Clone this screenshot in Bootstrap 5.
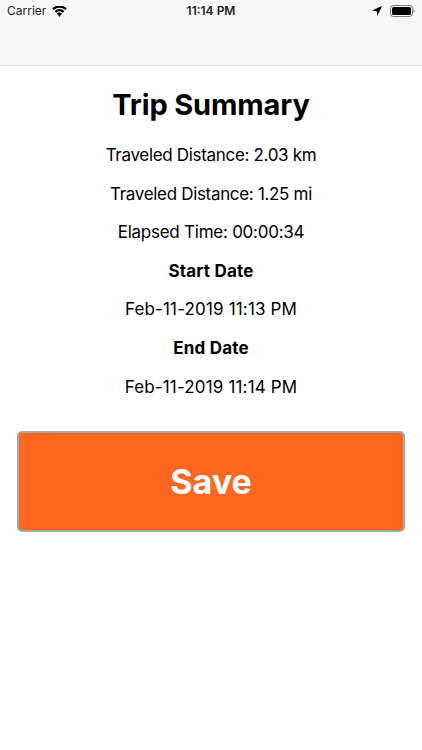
<!DOCTYPE html>
<html lang="en"><head><meta charset="utf-8">
<link href="https://cdn.jsdelivr.net/npm/bootstrap@5.3.0/dist/css/bootstrap.min.css" rel="stylesheet">
<style>
html,body{height:750px;overflow:hidden;background:#fff}
body{font-family:Inter,"Liberation Sans",sans-serif;color:#000}
.topbar{height:66px;background:#f8f8f8;border-bottom:1px solid #dcdcdc}
.statusline{height:22px;font-size:12px;padding:0 7px;font-weight:400;color:#222}
.statusline .clock{font-weight:600;top:3px;line-height:16px}
.carrierset{gap:6px}
.sumtitle{font-size:29px;font-weight:700;line-height:35px;margin:0;padding-top:21px;letter-spacing:-.15px}
.sumlines{font-size:17px;line-height:21px;gap:17.6px;padding-top:23px}
.sumlines p{margin:0}
.sumlines .tight{letter-spacing:-.32px}
.sumlines .mid{letter-spacing:-.25px}
.sumlines .wide{letter-spacing:.16px}
.sumlines .boldwide{letter-spacing:.2px}
.savebtn{margin:33px 17px 0;width:388px;height:101px;background:#ff6720;border:2px solid #a9a9a9;border-radius:5px;color:#fff;font-size:34px;font-weight:700;padding:0}
.savebtn:hover{background:#ff6720;color:#fff;border-color:#a9a9a9}
</style></head><body>
<div class="topbar"><div class="statusline d-flex align-items-center justify-content-between position-relative">
<div class="d-flex align-items-center carrierset"><span>Carrier</span>
<svg width="15" height="11" viewBox="0 0 16 12"><path d="M8 11.800 5.200 8.400a4.200 4.200 0 0 1 5.600 0zM4.300 7.400 2.700 5.400a8 8 0 0 1 10.600 0l-1.600 2a5.600 5.600 0 0 0-7.400 0zM1.700 4.400 0 2.500a12 12 0 0 1 16 0l-1.700 1.900a9.600 9.600 0 0 0-12.600 0z"/></svg></div>
<span class="clock position-absolute start-50 translate-middle-x">11:14 PM</span>
<div class="d-flex align-items-center gap-2">
<svg width="10" height="10" viewBox="0 0 10 10"><path d="M10 0 0 4.600l4.700.7.7 4.700z"/></svg>
<svg width="25" height="12" viewBox="0 0 25 12"><rect x=".5" y=".5" width="22" height="11" rx="2.800" fill="none" stroke="#000" opacity=".5"/><rect x="2" y="2" width="19" height="8" rx="1.500"/><path d="M23.600 4v4a2 2 0 0 0 1.200-2 2 2 0 0 0-1.200-2z" opacity=".5"/></svg>
</div></div></div>
<main class="text-center">
<h1 class="sumtitle">Trip Summary</h1>
<div class="sumlines d-flex flex-column">
<p class="tight">Traveled Distance: 2.03 km</p>
<p class="tight">Traveled Distance: 1.25 mi</p>
<p class="mid">Elapsed Time: 00:00:34</p>
<p class="fw-bold boldwide">Start Date</p>
<p class="wide">Feb-11-2019 11:13 PM</p>
<p class="fw-bold boldwide">End Date</p>
<p class="wide">Feb-11-2019 11:14 PM</p>
</div>
<button type="button" class="btn savebtn d-block">Save</button>
</main>
<script src="https://cdn.jsdelivr.net/npm/bootstrap@5.3.0/dist/js/bootstrap.bundle.min.js"></script>
</body></html>
